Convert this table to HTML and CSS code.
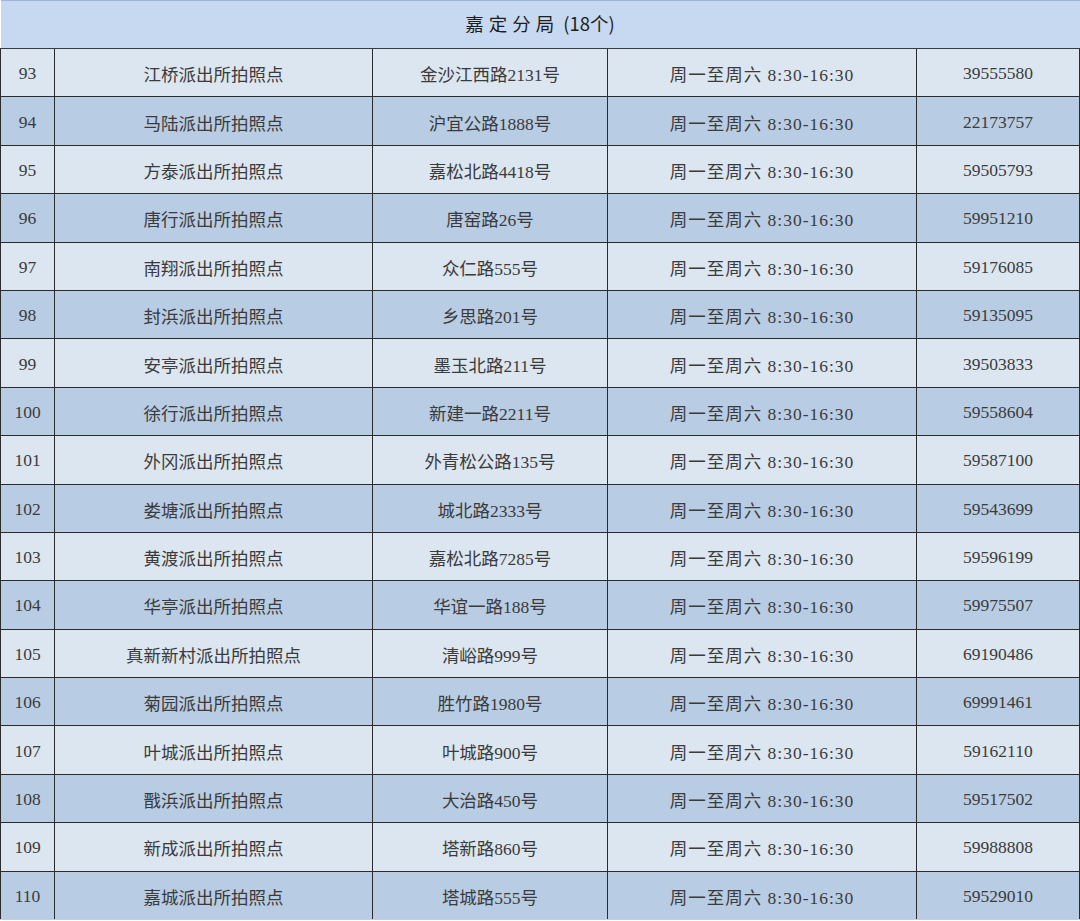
FILE: index.html
```html
<!DOCTYPE html>
<html lang="zh">
<head>
<meta charset="utf-8">
<link rel="stylesheet" href="styles.css">
</head>
<body>
<table class="tbl">
<colgroup>
<col class="c1"><col class="c2"><col class="c3"><col class="c4"><col class="c5">
</colgroup>
<thead>
<tr><th colspan="5" class="head"><span class="sp">嘉定分局</span> (18个)</th></tr>
</thead>
<tbody>
<tr class="lt"><td>93</td><td>江桥派出所拍照点</td><td>金沙江西路2131号</td><td>周一至周六 8:30-16:30</td><td>39555580</td></tr>
<tr class="dk"><td>94</td><td>马陆派出所拍照点</td><td>沪宜公路1888号</td><td>周一至周六 8:30-16:30</td><td>22173757</td></tr>
<tr class="lt"><td>95</td><td>方泰派出所拍照点</td><td>嘉松北路4418号</td><td>周一至周六 8:30-16:30</td><td>59505793</td></tr>
<tr class="dk"><td>96</td><td>唐行派出所拍照点</td><td>唐窑路26号</td><td>周一至周六 8:30-16:30</td><td>59951210</td></tr>
<tr class="lt"><td>97</td><td>南翔派出所拍照点</td><td>众仁路555号</td><td>周一至周六 8:30-16:30</td><td>59176085</td></tr>
<tr class="dk"><td>98</td><td>封浜派出所拍照点</td><td>乡思路201号</td><td>周一至周六 8:30-16:30</td><td>59135095</td></tr>
<tr class="lt"><td>99</td><td>安亭派出所拍照点</td><td>墨玉北路211号</td><td>周一至周六 8:30-16:30</td><td>39503833</td></tr>
<tr class="dk"><td>100</td><td>徐行派出所拍照点</td><td>新建一路2211号</td><td>周一至周六 8:30-16:30</td><td>59558604</td></tr>
<tr class="lt"><td>101</td><td>外冈派出所拍照点</td><td>外青松公路135号</td><td>周一至周六 8:30-16:30</td><td>59587100</td></tr>
<tr class="dk"><td>102</td><td>娄塘派出所拍照点</td><td>城北路2333号</td><td>周一至周六 8:30-16:30</td><td>59543699</td></tr>
<tr class="lt"><td>103</td><td>黄渡派出所拍照点</td><td>嘉松北路7285号</td><td>周一至周六 8:30-16:30</td><td>59596199</td></tr>
<tr class="dk"><td>104</td><td>华亭派出所拍照点</td><td>华谊一路188号</td><td>周一至周六 8:30-16:30</td><td>59975507</td></tr>
<tr class="lt"><td>105</td><td>真新新村派出所拍照点</td><td>清峪路999号</td><td>周一至周六 8:30-16:30</td><td>69190486</td></tr>
<tr class="dk"><td>106</td><td>菊园派出所拍照点</td><td>胜竹路1980号</td><td>周一至周六 8:30-16:30</td><td>69991461</td></tr>
<tr class="lt"><td>107</td><td>叶城派出所拍照点</td><td>叶城路900号</td><td>周一至周六 8:30-16:30</td><td>59162110</td></tr>
<tr class="dk"><td>108</td><td>戬浜派出所拍照点</td><td>大治路450号</td><td>周一至周六 8:30-16:30</td><td>59517502</td></tr>
<tr class="lt"><td>109</td><td>新成派出所拍照点</td><td>塔新路860号</td><td>周一至周六 8:30-16:30</td><td>59988808</td></tr>
<tr class="dk"><td>110</td><td>嘉城派出所拍照点</td><td>塔城路555号</td><td>周一至周六 8:30-16:30</td><td>59529010</td></tr>
</tbody>
</table>
</body>
</html>
```
FILE: styles.css
```css
html, body {
  margin: 0;
  padding: 0;
  background: #ffffff;
}
.tbl {
  width: 1079px;
  border-collapse: collapse;
  table-layout: fixed;
  border-top: 1px solid #9fb6d4;
}
.c1 { width: 54px; }
.c2 { width: 318px; }
.c3 { width: 235px; }
.c4 { width: 309px; }
.c5 { width: 163px; }
.head {
  height: 43px;
  padding: 0 0 4px 0;
  background: #c6d9f0;
  font-family: "Noto Sans CJK SC", "Noto Sans", sans-serif;
  font-weight: 400;
  font-size: 18.5px;
  color: #1e1e1e;
  text-align: center;
  border-bottom: 1px solid #3a3a3a;
}
.sp {
  letter-spacing: 5px;
}
.tbl td {
  height: 45.4px;
  padding: 2px 0 0 0;
  border: 1px solid #2b2b2b;
  text-align: center;
  font-family: "Liberation Serif", "Noto Sans CJK SC", serif;
  font-size: 17.5px;
  color: #3b3b3b;
}
.tbl td:nth-child(4) {
  letter-spacing: 1px;
}
.lt td { background: #dce6f1; }
.dk td { background: #b8cce4; }
.tbl tbody tr:last-child td { border-bottom: 1px solid #c0d0e6; }
```
